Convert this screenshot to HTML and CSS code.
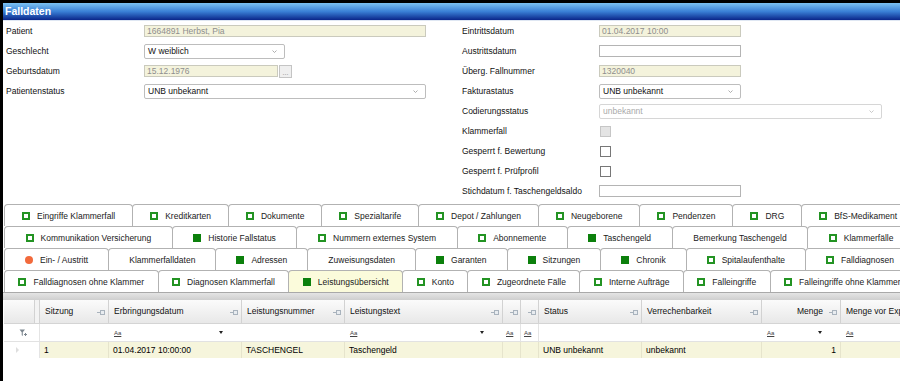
FILE: index.html
```html
<!DOCTYPE html>
<html lang="de">
<head>
	<meta charset="UTF-8">
	<title>Falldaten</title>
	<link rel="stylesheet" href="styles.css">
</head>
<body>
<div class="frame">
	<div class="titlebar">Falldaten</div>

	<div class="form">
		<div class="col col-left">
			<div class="row"><span class="lbl">Patient</span><span class="inp ro w282">1664891 Herbst, Pia</span></div>
			<div class="row"><span class="lbl">Geschlecht</span><span class="sel w141">W weiblich<svg class="chev" width="5" height="3" viewBox="0 0 5 3"><polyline points="0.5,0.5 2.5,2.5 4.5,0.5" fill="none" stroke="#999" stroke-width="0.8"/></svg></span></div>
			<div class="row"><span class="lbl">Geburtsdatum</span><span class="inp ro w134">15.12.1976</span><span class="dots">...</span></div>
			<div class="row"><span class="lbl">Patientenstatus</span><span class="sel w282">UNB unbekannt<svg class="chev" width="5" height="3" viewBox="0 0 5 3"><polyline points="0.5,0.5 2.5,2.5 4.5,0.5" fill="none" stroke="#999" stroke-width="0.8"/></svg></span></div>
		</div>
		<div class="col col-right">
			<div class="row"><span class="lbl">Eintrittsdatum</span><span class="inp ro w142">01.04.2017 10:00</span></div>
			<div class="row"><span class="lbl">Austrittsdatum</span><span class="inp w142"></span></div>
			<div class="row"><span class="lbl">Überg. Fallnummer</span><span class="inp ro w142">1320040</span></div>
			<div class="row"><span class="lbl">Fakturastatus</span><span class="sel w142">UNB unbekannt<svg class="chev" width="5" height="3" viewBox="0 0 5 3"><polyline points="0.5,0.5 2.5,2.5 4.5,0.5" fill="none" stroke="#999" stroke-width="0.8"/></svg></span></div>
			<div class="row"><span class="lbl">Codierungsstatus</span><span class="sel off w283">unbekannt<svg class="chev" width="5" height="3" viewBox="0 0 5 3"><polyline points="0.5,0.5 2.5,2.5 4.5,0.5" fill="none" stroke="#bbb" stroke-width="0.8"/></svg></span></div>
			<div class="row"><span class="lbl">Klammerfall</span><span class="chk off"></span></div>
			<div class="row"><span class="lbl">Gesperrt f. Bewertung</span><span class="chk"></span></div>
			<div class="row"><span class="lbl">Gesperrt f. Prüfprofil</span><span class="chk"></span></div>
			<div class="row"><span class="lbl">Stichdatum f. Taschengeldsaldo</span><span class="inp w142"></span></div>
		</div>
	</div>

	<div class="tabs">
		<div class="tabrow">
			<div class="tab"><i class="ic open"></i>Eingriffe Klammerfall</div>
			<div class="tab"><i class="ic open"></i>Kreditkarten</div>
			<div class="tab"><i class="ic open"></i>Dokumente</div>
			<div class="tab"><i class="ic open"></i>Spezialtarife</div>
			<div class="tab"><i class="ic open"></i>Depot / Zahlungen</div>
			<div class="tab"><i class="ic open"></i>Neugeborene</div>
			<div class="tab"><i class="ic open"></i>Pendenzen</div>
			<div class="tab"><i class="ic open"></i>DRG</div>
			<div class="tab"><i class="ic open"></i>BfS-Medikament</div>
		</div>
		<div class="tabrow">
			<div class="tab"><i class="ic open"></i>Kommunikation Versicherung</div>
			<div class="tab"><i class="ic full"></i>Historie Fallstatus</div>
			<div class="tab"><i class="ic open"></i>Nummern externes System</div>
			<div class="tab"><i class="ic open"></i>Abonnemente</div>
			<div class="tab"><i class="ic full"></i>Taschengeld</div>
			<div class="tab plain">Bemerkung Taschengeld</div>
			<div class="tab"><i class="ic open"></i>Klammerfälle</div>
		</div>
		<div class="tabrow">
			<div class="tab"><i class="ic dot"></i>Ein- / Austritt</div>
			<div class="tab plain">Klammerfalldaten</div>
			<div class="tab"><i class="ic full"></i>Adressen</div>
			<div class="tab plain">Zuweisungsdaten</div>
			<div class="tab"><i class="ic full"></i>Garanten</div>
			<div class="tab"><i class="ic full"></i>Sitzungen</div>
			<div class="tab"><i class="ic full"></i>Chronik</div>
			<div class="tab"><i class="ic open"></i>Spitalaufenthalte</div>
			<div class="tab"><i class="ic open"></i>Falldiagnosen</div>
		</div>
		<div class="tabrow">
			<div class="tab"><i class="ic open"></i>Falldiagnosen ohne Klammer</div>
			<div class="tab"><i class="ic open"></i>Diagnosen Klammerfall</div>
			<div class="tab on"><i class="ic full"></i>Leistungsübersicht</div>
			<div class="tab"><i class="ic open"></i>Konto</div>
			<div class="tab"><i class="ic open"></i>Zugeordnete Fälle</div>
			<div class="tab"><i class="ic open"></i>Interne Aufträge</div>
			<div class="tab"><i class="ic open"></i>Falleingriffe</div>
			<div class="tab"><i class="ic open"></i>Falleingriffe ohne Klammer</div>
		</div>
	</div>
	<div class="tabpanel"></div>

	<div class="grid">
		<div class="gr ghead">
			<div class="gc selc"></div>
			<div class="gc"><span class="ht">Sitzung</span><svg class="pin" width="8" height="5" viewBox="0 0 8 5"><line x1="0" y1="2.5" x2="3" y2="2.5" stroke="#a9b3bd"/><rect x="3.5" y="0.5" width="4" height="4" fill="#e8ecf0" stroke="#a9b3bd"/></svg></div>
			<div class="gc"><span class="ht">Erbringungsdatum</span><svg class="pin" width="8" height="5" viewBox="0 0 8 5"><line x1="0" y1="2.5" x2="3" y2="2.5" stroke="#a9b3bd"/><rect x="3.5" y="0.5" width="4" height="4" fill="#e8ecf0" stroke="#a9b3bd"/></svg></div>
			<div class="gc"><span class="ht">Leistungsnummer</span><svg class="pin" width="8" height="5" viewBox="0 0 8 5"><line x1="0" y1="2.5" x2="3" y2="2.5" stroke="#a9b3bd"/><rect x="3.5" y="0.5" width="4" height="4" fill="#e8ecf0" stroke="#a9b3bd"/></svg></div>
			<div class="gc"><span class="ht">Leistungstext</span><svg class="pin" width="8" height="5" viewBox="0 0 8 5"><line x1="0" y1="2.5" x2="3" y2="2.5" stroke="#a9b3bd"/><rect x="3.5" y="0.5" width="4" height="4" fill="#e8ecf0" stroke="#a9b3bd"/></svg></div>
			<div class="gc tiny"><span class="ht"></span><svg class="pin" width="8" height="5" viewBox="0 0 8 5"><line x1="0" y1="2.5" x2="3" y2="2.5" stroke="#a9b3bd"/><rect x="3.5" y="0.5" width="4" height="4" fill="#e8ecf0" stroke="#a9b3bd"/></svg></div>
			<div class="gc tiny"><span class="ht"></span><svg class="pin" width="8" height="5" viewBox="0 0 8 5"><line x1="0" y1="2.5" x2="3" y2="2.5" stroke="#a9b3bd"/><rect x="3.5" y="0.5" width="4" height="4" fill="#e8ecf0" stroke="#a9b3bd"/></svg></div>
			<div class="gc"><span class="ht">Status</span><svg class="pin" width="8" height="5" viewBox="0 0 8 5"><line x1="0" y1="2.5" x2="3" y2="2.5" stroke="#a9b3bd"/><rect x="3.5" y="0.5" width="4" height="4" fill="#e8ecf0" stroke="#a9b3bd"/></svg></div>
			<div class="gc"><span class="ht">Verrechenbarkeit</span><svg class="pin" width="8" height="5" viewBox="0 0 8 5"><line x1="0" y1="2.5" x2="3" y2="2.5" stroke="#a9b3bd"/><rect x="3.5" y="0.5" width="4" height="4" fill="#e8ecf0" stroke="#a9b3bd"/></svg></div>
			<div class="gc"><span class="ht num">Menge</span><svg class="pin" width="8" height="5" viewBox="0 0 8 5"><line x1="0" y1="2.5" x2="3" y2="2.5" stroke="#a9b3bd"/><rect x="3.5" y="0.5" width="4" height="4" fill="#e8ecf0" stroke="#a9b3bd"/></svg></div>
			<div class="gc"><span class="ht">Menge vor Exp</span></div>
		</div>
		<div class="gr gfilter">
			<div class="gc selc"><svg width="8" height="8" viewBox="0 0 8 8"><path d="M0.5 0.5 H6 L3.8 3.2 V7 L2.7 6.2 V3.2 Z" fill="#7d8790"/><path d="M5 5.5 H8 M6.5 4 V7" stroke="#7d8790" stroke-width="1"/></svg></div>
			<div class="gc"></div>
			<div class="gc"><span class="aa">Aa</span><i class="dd"></i></div>
			<div class="gc"></div>
			<div class="gc"><span class="aa">Aa</span><i class="dd"></i></div>
			<div class="gc tiny"><span class="aa">Aa</span></div>
			<div class="gc tiny"><span class="aa">Aa</span></div>
			<div class="gc"></div>
			<div class="gc"></div>
			<div class="gc"><span class="aa">Aa</span><i class="dd"></i></div>
			<div class="gc"><span class="aa">Aa</span></div>
		</div>
		<div class="gr gdata">
			<div class="gc selc"><i class="arrow"></i></div>
			<div class="gc">1</div>
			<div class="gc">01.04.2017 10:00:00</div>
			<div class="gc">TASCHENGEL</div>
			<div class="gc">Taschengeld</div>
			<div class="gc"></div>
			<div class="gc"></div>
			<div class="gc">UNB unbekannt</div>
			<div class="gc">unbekannt</div>
			<div class="gc num">1</div>
			<div class="gc"></div>
		</div>
	</div>
</div>
</body>
</html>
```

FILE: styles.css
```css
html, body{
	margin: 0;
	padding: 0;
}
body{
	background: #000;
	font-family: "Liberation Sans", Arial, sans-serif;
	font-size: 8.5px;
	color: #111;
	overflow: hidden;
}
.frame{
	margin: 3px 0 0 3px;
	height: 378px;
	background: #fff;
	overflow: hidden;
}
.titlebar{
	height: 17px;
	line-height: 17px;
	padding-left: 2px;
	border-bottom: 1px solid #dfe7f3;
	color: #fff;
	font-weight: bold;
	font-size: 10.5px;
	background: linear-gradient(#7cc2f2, #3a80d6 50%, #0a268a);
}

/* form */
.form{
	display: flex;
}
.col-left{
	width: 456px;
	padding-left: 3px;
}
.row{
	height: 20px;
	display: flex;
	align-items: center;
}
.lbl{
	width: 138px;
	flex: none;
	white-space: nowrap;
}
.col-right .lbl{
	width: 137px;
}
.inp{
	box-sizing: border-box;
	height: 12px;
	line-height: 10px;
	padding-left: 2px;
	border: 1px solid #b4b4b4;
	background: #fff;
	color: #333;
}
.inp.ro{
	background: #f4f3dc;
	border-color: #cacabd;
	color: #8e8e8e;
}
.sel{
	box-sizing: border-box;
	height: 15px;
	padding: 0 7px 0 3px;
	display: flex;
	align-items: center;
	justify-content: space-between;
	border: 1px solid #bdbdbd;
	border-radius: 2px;
	background: #fff;
	color: #111;
}
.sel.off{
	color: #aaa;
	border-color: #d6d6d6;
}
.chev{
	flex: none;
}
.w134{ width: 134px; }
.w141{ width: 141px; }
.w142{ width: 142px; }
.w282{ width: 282px; }
.w283{ width: 283px; }
.dots{
	box-sizing: border-box;
	width: 13px;
	height: 13px;
	margin-left: 1px;
	border: 1px solid #c4c4c4;
	background: #efefef;
	color: #888;
	font-size: 7px;
	line-height: 13px;
	text-align: center;
}
.chk{
	box-sizing: border-box;
	width: 11px;
	height: 11px;
	margin-left: 1px;
	border: 1px solid #777;
	background: #fff;
}
.chk.off{
	background: #e4e4e4;
	border-color: #c6c6c6;
}

/* tabs */
.tabs{
	margin: 3px 0 0 1px;
	width: 910px;
}
.tabrow{
	display: flex;
	height: 22px;
}
.tab{
	flex: 1 1 auto;
	box-sizing: border-box;
	display: flex;
	align-items: center;
	justify-content: center;
	gap: 7px;
	padding: 0 8px;
	margin-right: -1px;
	border: 1px solid #b2b2b2;
	border-bottom: none;
	border-radius: 4px 4px 0 0;
	background: #fff;
	white-space: nowrap;
	color: #1a1a1a;
}
.tab.on{
	background: #fbfbdb;
}
.ic{
	box-sizing: border-box;
	width: 8px;
	height: 8px;
	flex: none;
}
.ic.open{
	border: 2px solid #239323;
}
.ic.full{
	background: #0c800c;
}
.ic.dot{
	border-radius: 50%;
	background: #f26a3c;
}
.tabpanel{
	height: 7px;
	border-top: 1px solid #a9a9a9;
	background: linear-gradient(#e4e4e4, #cfcfcf);
}

/* grid */
.gr{
	display: grid;
	grid-template-columns: 36px 69px 133px 103px 158px 18px 18px 103px 120px 79px 140px;
	margin-left: 1px;
}
.gc{
	box-sizing: border-box;
	display: flex;
	align-items: center;
	padding: 0 3px 0 5px;
	white-space: nowrap;
	overflow: hidden;
}
.ghead{
	height: 23px;
	background: linear-gradient(#fbfbfb, #e8e8e8);
	border-bottom: 1px solid #d4d4d4;
}
.ghead .gc{
	border-right: 1px solid #d2d2d2;
}
.ghead .selc{
	box-shadow: inset -4px 0 0 #f3f3f3, inset -5px 0 0 #d2d2d2;
}
.ht{
	flex: 1;
	margin-bottom: 2px;
}
.ht.num{
	text-align: right;
	padding-right: 6px;
}
.pin{
	flex: none;
	margin-top: 2px;
}
.tiny{
	padding: 0 2px 0 3px;
}
.gfilter{
	height: 17px;
	border-bottom: 1px solid #e2e2e2;
}
.gfilter .tiny, .gfilter .selc{
	border-right: 1px solid #e4e4e4;
}
.gfilter .selc{
	justify-content: center;
	padding: 0 0 0 2px;
}
.aa{
	font-size: 6px;
	text-decoration: underline;
	color: #444;
	flex: 1;
}
.dd{
	width: 0;
	height: 0;
	margin-right: 16px;
	border-left: 2.5px solid transparent;
	border-right: 2.5px solid transparent;
	border-top: 3px solid #222;
}
.gdata{
	height: 16px;
	color: #000;
}
.gdata .gc{
	background: #f6f5dc;
	border-right: 1px solid #e6e4cc;
	padding-left: 4px;
}
.gdata .selc{
	background: #fff;
	border-right-color: #e4e4e4;
	padding-left: 12px;
}
.gdata .num{
	justify-content: flex-end;
	padding-right: 4px;
}
.arrow{
	width: 0;
	height: 0;
	border-top: 3px solid transparent;
	border-bottom: 3px solid transparent;
	border-left: 3px solid #dedede;
}
```
